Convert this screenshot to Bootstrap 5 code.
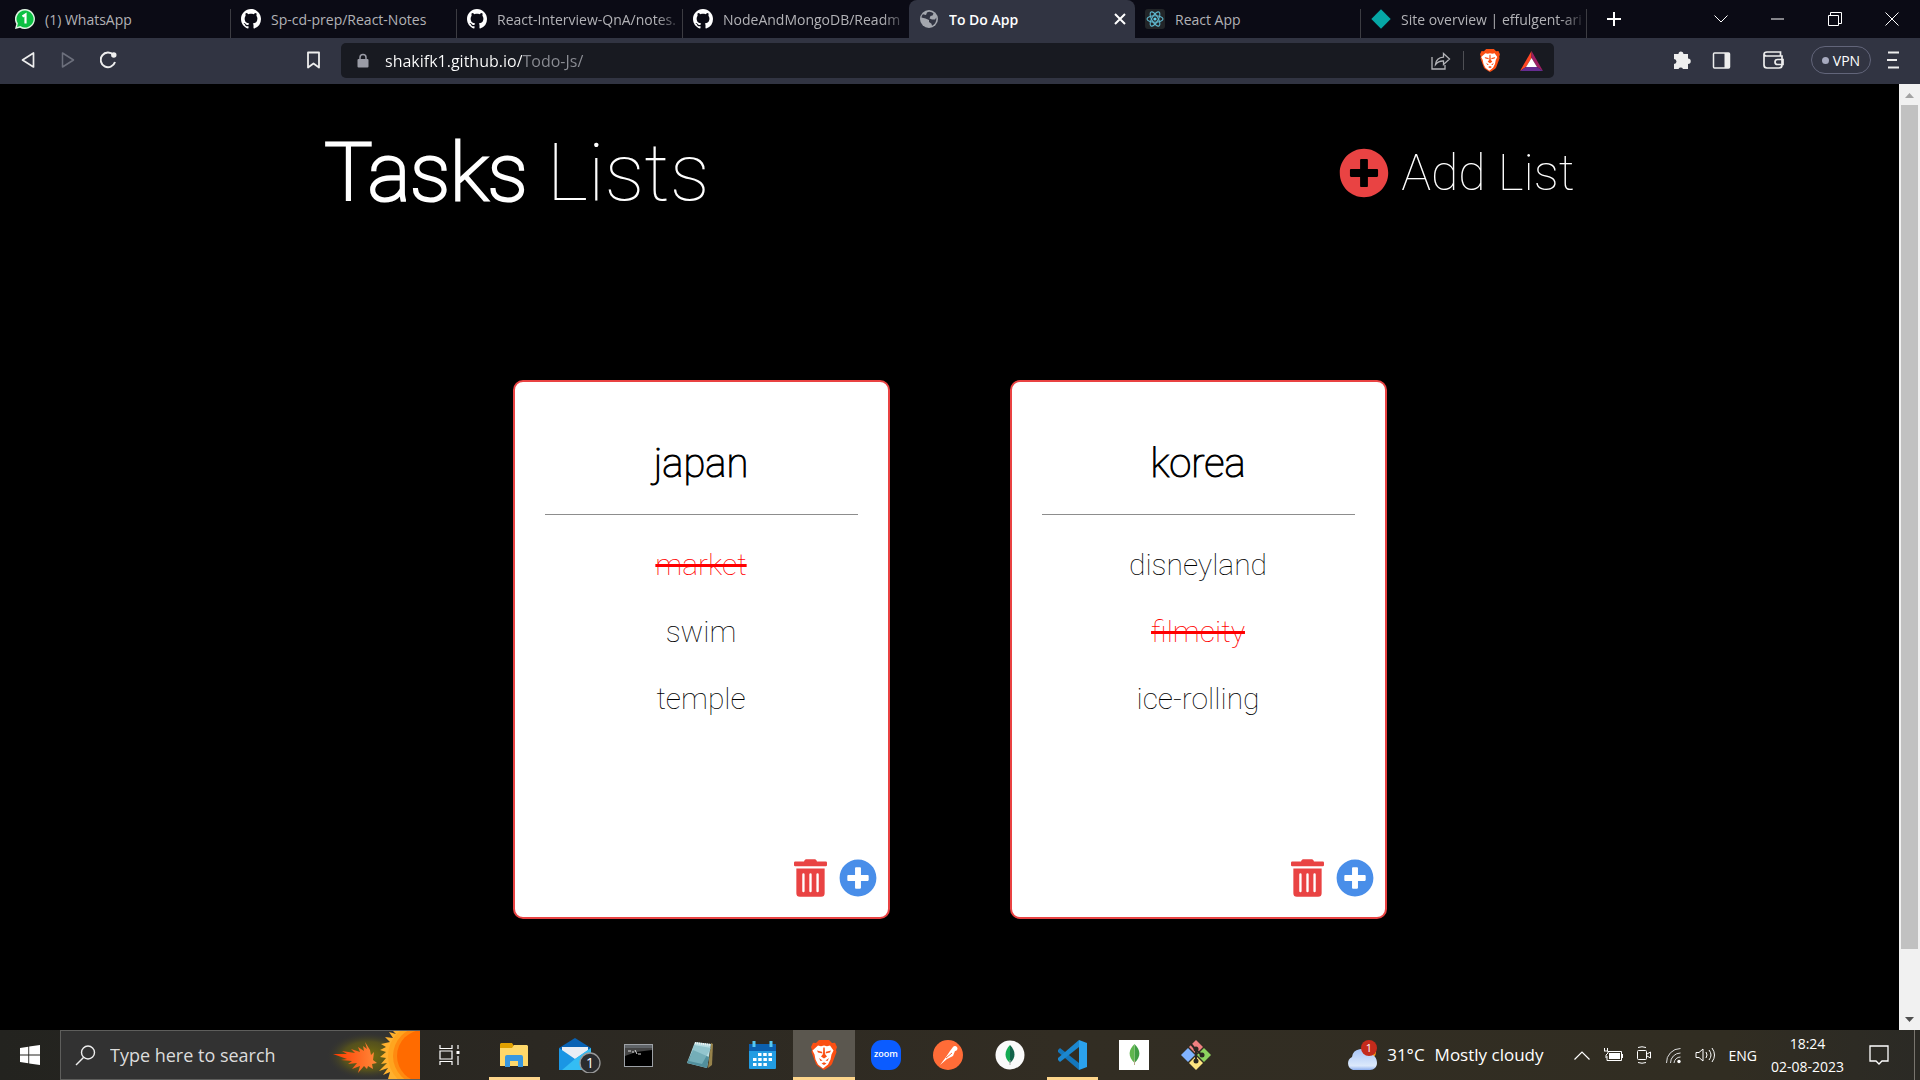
<!DOCTYPE html>
<html lang="en">
<head>
<meta charset="utf-8">
<meta name="viewport" content="width=device-width, initial-scale=1">
<title>To Do App</title>
<link href="https://cdn.jsdelivr.net/npm/bootstrap@5.3.0/dist/css/bootstrap.min.css" rel="stylesheet">
<style>
  :root { --ui: "Open Sans", "Noto Sans", sans-serif; --red: #e94343; --blue: #498ee9; }
  body { font-family: var(--ui); background: #000; overflow: hidden; }
  svg { display: block; flex: none; }
  button { background: none; border: 0; padding: 0; color: inherit; }

  /* Tab strip */
  .tab-strip { height: 38px; background: #0b0b15; color: #b2b2b6; font-size: 14px; }
  .tab-item { flex: 0 1 226px; min-width: 0; gap: 10px; padding: 0 0 0 10px; color: inherit; text-decoration: none; position: relative; }
  .tab-first { flex-basis: 231px; padding-left: 15px; }
  .tab-item .tab-name { overflow: hidden; white-space: nowrap; flex: 1 1 0; }
  .tab-item .fade-name { -webkit-mask-image: linear-gradient(to right, #000 86%, transparent); mask-image: linear-gradient(to right, #000 86%, transparent); }
  .tab-rule::after { content: ""; position: absolute; right: 0; top: 9px; bottom: 0; width: 1px; background: #3c3c42; }
  .tab-current { background: #313442; color: #fff; border-radius: 8px 8px 0 0; font-weight: 600; padding-right: 8px; }
  .win-buttons button { width: 57px; height: 38px; display: flex; align-items: center; justify-content: center; color: #fff; }
  .win-buttons .new-tab { width: 53px; }

  /* Toolbar */
  .tool-bar { height: 46px; background: #313442; color: #eee; }
  .nav-tools { flex: 0 0 341px; padding: 0 20px 2px 20px; }
  .address-bar { flex: 1 1 0; height: 35px; background: #181a21; border-radius: 5px; padding: 0 11px 0 16px; margin-top: -1px; }
  .url-box { background: linear-gradient(to right, #fff 137px, #8b8d94 137px); -webkit-background-clip: text; background-clip: text; color: transparent; border: 0; outline: 0; flex: 1 1 0; min-width: 0; font-size: 16px; padding: 0; }
  .bar-rule { margin: 8px 16px 8px 12px; }
  .right-tools { flex: 0 0 366px; padding: 0 21px 2px 0; }
  .vpn-pill { width: 60px; height: 28px; border: 1px solid #62657a; border-radius: 14px; font-size: 14px; color: #fff; margin-left: 27px; }
  .vpn-pill i { width: 7px; height: 7px; border-radius: 50%; background: #a7aabf; }

  /* Page */
  .page-body { background: #000; font-family: Roboto, sans-serif; font-weight: 100; color: #fff; }
  .head-wrap { width: 100%; max-width: 1250px; margin: 0 auto; padding-top: 42px; }
  .page-title { font-size: 80px; line-height: 94px; font-weight: 100; }
  .page-title b { font-weight: 100; -webkit-text-stroke: 3px #fff; }
  .add-list { font-size: 50px; line-height: 60px; gap: 12px; font-weight: 100; }
  .list-row { gap: 120px; margin-top: 160px; }
  .task-card { width: 377px; height: 539px; background: #fff; border: 2px solid var(--red); border-radius: 10px; color: #000; padding: 57px 30px 0; position: relative; }
  .task-card h2 { font-size: 40px; line-height: 50px; font-weight: 100; -webkit-text-stroke: 1px #000; margin: 0; }
  .task-card hr { margin: 25px 0 32px; opacity: 1; border-top: 1px solid #8d8d8d; }
  .task-card li { font-size: 30px; line-height: 35px; margin-bottom: 32px; }
  .task-card .done-task { color: #f00; text-decoration: line-through 3px; }
  .card-tools { position: absolute; right: 11px; bottom: 20px; gap: 12px; }
  .card-tools .del { color: var(--red); }
  .card-tools .plus { color: var(--blue); }
  .scroll-track { width: 21px; background: #f1f1f1; }
  .scroll-thumb { width: 17px; flex: 0 1 844px; background: #c1c1c1; }
  .scroll-track svg { height: 21px; }

  /* Taskbar */
  .task-bar { height: 50px; background: linear-gradient(to right, #23231f, #2b2822 28%, #322d23 55%, #312d22 90%, #2b2a25); color: #fff; }
  .start-btn { width: 60px; display: flex; align-items: center; justify-content: center; }
  .search-area { width: 360px; background: #323232; border: 1px solid #5e5e5c; border-right: 0; padding-left: 14px; overflow: hidden; }
  .search-area input { flex: 1 1 0; min-width: 0; background: none; border: 0; outline: 0; font-size: 18px; padding: 0 0 0 14px; color: #ddd; }
  .search-area input::placeholder { color: #dcdcdc; opacity: 1; }
  .app-btn { width: 62px; display: flex; align-items: center; justify-content: center; position: relative; }
  .app-view { width: 63px; padding-right: 4px; }
  .app-open::after { content: ""; position: absolute; bottom: 0; left: 6px; right: 5px; height: 3px; background: #fdd58b; }
  .app-focus { background: #5b574f; }
  .app-focus::after { left: 0; right: 0; }
  .weather-btn { font-size: 17px; gap: 10px; margin-right: 30px; }
  .tray { gap: 13px; font-size: 14px; margin-right: 8px; }
  .clock { width: 85px; font-size: 14px; line-height: 23px; }
  .note-btn { width: 57px; margin-right: 7px; display: flex; align-items: center; justify-content: center; }
  .desk-edge { width: 6px; border-left: 1px solid #78756e; }
</style>
<script src="https://cdn.jsdelivr.net/npm/bootstrap@5.3.0/dist/js/bootstrap.bundle.min.js"></script>
</head>
<body class="vh-100 d-flex flex-column">

<svg width="0" height="0" class="position-absolute" aria-hidden="true">
  <symbol id="gh" viewBox="0 0 16 16"><path fill="#fff" d="M8 0C3.58 0 0 3.58 0 8c0 3.54 2.29 6.53 5.47 7.59.4.07.55-.17.55-.38 0-.19-.01-.82-.01-1.49-2.01.37-2.53-.49-2.69-.94-.09-.23-.48-.94-.82-1.13-.28-.15-.68-.52-.01-.53.63-.01 1.08.58 1.23.82.72 1.21 1.87.87 2.33.66.07-.52.28-.87.51-1.07-1.78-.2-3.64-.89-3.64-3.95 0-.87.31-1.59.82-2.15-.08-.2-.36-1.02.08-2.12 0 0 .67-.21 2.2.82.64-.18 1.32-.27 2-.27s1.36.09 2 .27c1.53-1.04 2.2-.82 2.2-.82.44 1.1.16 1.92.08 2.12.51.56.82 1.27.82 2.15 0 3.07-1.87 3.75-3.65 3.95.29.25.54.73.54 1.48 0 1.07-.01 1.93-.01 2.2 0 .21.15.46.55.38A8.01 8.01 0 0 0 16 8c0-4.42-3.58-8-8-8z"/></symbol>
  <symbol id="plus-circle" viewBox="0 0 512 512"><path fill="currentColor" d="M256 8C119 8 8 119 8 256s111 248 248 248 248-111 248-248S393 8 256 8zm144 276c0 6.600-5.400 12-12 12h-92v92c0 6.600-5.400 12-12 12h-56c-6.600 0-12-5.400-12-12v-92h-92c-6.600 0-12-5.400-12-12v-56c0-6.600 5.400-12 12-12h92v-92c0-6.600 5.400-12 12-12h56c6.600 0 12 5.400 12 12v92h92c6.600 0 12 5.400 12 12v56z"/></symbol>
  <symbol id="trash" viewBox="0 0 448 512"><path fill="currentColor" d="M32 464a48 48 0 0 0 48 48h288a48 48 0 0 0 48-48V128H32zm272-256a16 16 0 0 1 32 0v224a16 16 0 0 1-32 0zm-96 0a16 16 0 0 1 32 0v224a16 16 0 0 1-32 0zm-96 0a16 16 0 0 1 32 0v224a16 16 0 0 1-32 0zM432 32H312l-9.400-18.700A24 24 0 0 0 281.100 0H166.800a23.720 23.720 0 0 0-21.400 13.300L136 32H16A16 16 0 0 0 0 48v32a16 16 0 0 0 16 16h416a16 16 0 0 0 16-16V48a16 16 0 0 0-16-16z"/></symbol>
  <symbol id="brave" viewBox="0 0 26 30"><path fill="#fb4f13" d="M8 0h10l3 3 3-.3L26 7l-1 3 .5 2L21 24c-1 2-5 4-8 6-3-2-7-4-8-6L.5 12 1 10 0 7l2-4.300L5 3z"/><path fill="#fff" d="M7 5.500l3 .700 3-.700 3 .700 3-.700 3.500 5-2 4-1 5-2.500 5-5 4-5-4-2.500-5-1-5-2-4z"/><path fill="#fb4f13" d="M6 10.500l5 1.300.500 1.700-4.500-1zM20 10.500l-5 1.300-.500 1.700 4.500-1zM12.300 7.500h1.400l.3 6.500 2 2.500-3 2-3-2 2-2.500zM8 18l3.500 2.500-2 .500zM18 18l-3.500 2.500 2 .500zM10.500 23.500l2.500-1.300 2.500 1.300-2.500 1.500z"/></symbol>
</svg>

<header>
  <nav class="tab-strip d-flex" aria-label="Tabs">
    <a href="#" class="tab-item tab-first tab-rule d-flex align-items-center"><svg width="20" height="20" viewBox="0 0 20 20"><path fill="#dff5e3" d="M10 0a10 10 0 1 1-5 18.700L0 20l1.300-5A10 10 0 0 1 10 0z"/><path fill="#0cc143" d="M10 1.500a8.500 8.500 0 1 1-4.600 15.600L2 18l.900-3.400A8.500 8.500 0 0 1 10 1.500z"/><path d="M7.500 7.500L10.500 5.500V14.500" fill="none" stroke="#fff" stroke-width="2.200"/></svg><span class="tab-name">(1) WhatsApp</span></a>
    <a href="#" class="tab-item tab-rule d-flex align-items-center"><svg width="20" height="20"><use href="#gh"/></svg><span class="tab-name">Sp-cd-prep/React-Notes</span></a>
    <a href="#" class="tab-item tab-rule d-flex align-items-center"><svg width="20" height="20"><use href="#gh"/></svg><span class="tab-name fade-name">React-Interview-QnA/notes.</span></a>
    <a href="#" class="tab-item d-flex align-items-center"><svg width="20" height="20"><use href="#gh"/></svg><span class="tab-name fade-name">NodeAndMongoDB/Readm</span></a>
    <div class="tab-item tab-current d-flex align-items-center"><svg width="20" height="20" viewBox="0 0 20 20"><circle cx="10" cy="10" r="9" fill="#a4a7ae"/><path fill="#313442" d="M8 3.500c2-1.500 5-.500 6.500 1l-1 2-2 .500-1 2.500 2.500 1h3l1.300-2c.5 4-1.500 7-4.300 8.300l-.500-2-2.500-1.800V11L6.500 9.500 2.500 8.500c0-1 .500-2.200 1.500-3.200L7 6z"/></svg><span class="tab-name">To Do App</span><button aria-label="Close tab"><svg width="14" height="14" viewBox="0 0 14 14"><path d="M2 2l10 10M12 2L2 12" stroke="#fff" stroke-width="2"/></svg></button></div>
    <a href="#" class="tab-item tab-rule d-flex align-items-center"><svg width="20" height="20" viewBox="0 0 20 20"><rect width="20" height="20" rx="3" fill="#222528"/><g fill="none" stroke="#5fb8cf" stroke-width="1.100"><ellipse cx="10" cy="10" rx="8" ry="3.200"/><ellipse cx="10" cy="10" rx="8" ry="3.200" transform="rotate(60 10 10)"/><ellipse cx="10" cy="10" rx="8" ry="3.200" transform="rotate(120 10 10)"/></g><circle cx="10" cy="10" r="1.600" fill="#5fd0ea"/></svg><span class="tab-name">React App</span></a>
    <a href="#" class="tab-item tab-rule d-flex align-items-center"><svg width="20" height="20" viewBox="0 0 20 20"><path fill="#06a7a5" d="M10 .300L19.700 10 10 19.700.300 10z"/></svg><span class="tab-name fade-name">Site overview | effulgent-ari</span></a>
    <div class="win-buttons d-flex flex-grow-1">
      <button class="new-tab" aria-label="New tab"><svg width="16" height="16" viewBox="0 0 16 16"><path d="M8 1v14M1 8h14" stroke="#fff" stroke-width="2"/></svg></button>
      <button class="ms-auto" aria-label="Search tabs"><svg width="14" height="8" viewBox="0 0 14 8"><path d="M.500.500L7 7 13.500.500" fill="none" stroke="#fff"/></svg></button>
      <button aria-label="Minimize"><svg width="13" height="2"><path d="M0 1h13" stroke="#fff"/></svg></button>
      <button aria-label="Restore"><svg width="14" height="14" viewBox="0 0 14 14"><path d="M.500 3.500h10v10H.500zM2.500 3V.500h11v11H11" fill="none" stroke="#fff"/></svg></button>
      <button aria-label="Close"><svg width="14" height="14" viewBox="0 0 14 14"><path d="M.500.500l13 13M13.500.500l-13 13" stroke="#fff"/></svg></button>
    </div>
  </nav>

  <div class="tool-bar d-flex align-items-center">
    <div class="nav-tools d-flex align-items-center">
      <button aria-label="Back"><svg width="16" height="18" viewBox="0 0 16 18"><path d="M13.500 2v14L2.500 9z" fill="none" stroke="#eee" stroke-width="1.700" stroke-linejoin="round"/></svg></button>
      <button class="ms-4" aria-label="Forward"><svg width="16" height="18" viewBox="0 0 16 18"><path d="M2.500 2v14L13.500 9z" fill="none" stroke="#6c6f7c" stroke-width="1.500" stroke-linejoin="round"/></svg></button>
      <button class="ms-4" aria-label="Reload"><svg width="18" height="18" viewBox="0 0 18 18"><path d="M13.500 4A7.300 7.300 0 1 0 15 11" fill="none" stroke="#eee" stroke-width="2"/><circle cx="13.800" cy="4" r="2.700" fill="#eee"/></svg></button>
      <button class="ms-auto" aria-label="Bookmark"><svg width="15" height="18" viewBox="0 0 15 18"><path d="M2 1.500h11v15l-5.500-4-5.500 4z" fill="none" stroke="#eee" stroke-width="1.800" stroke-linejoin="round"/></svg></button>
    </div>
    <div class="address-bar d-flex align-items-center">
      <svg class="me-3" width="12" height="16" viewBox="0 0 12 16"><path d="M3 7V4.500a3 3 0 0 1 6 0V7" fill="none" stroke="#9a9ca6" stroke-width="1.500"/><rect x=".500" y="6" width="11" height="8.500" rx="1" fill="#9a9ca6"/></svg>
      <input class="url-box" type="text" aria-label="Address" value="shakifk1.github.io/Todo-Js/">
      <button aria-label="Share"><svg width="20" height="19" viewBox="0 0 20 19"><path d="M1 6v12h13v-4M4.500 13.500C5 9 8 6.500 12.500 6.200V2.500L18.500 8l-6 5.500V10C9 9.800 6.500 11 4.500 13.500z" fill="none" stroke="#b3b4b8" stroke-width="1.300"/></svg></button>
      <span class="vr bar-rule"></span>
      <button aria-label="Brave Shields"><svg width="20" height="23"><use href="#brave"/></svg></button>
      <button class="ms-3 ps-1" aria-label="Brave Rewards"><svg width="23" height="20" viewBox="0 0 23 20"><path fill="#ff4724" d="M11.500 0v7L6 16 0 20z"/><path fill="#9e1f63" d="M11.500 0v7l5.500 9 6 4z"/><path fill="#662d91" d="M0 20l6-4h11l6 4z"/><path fill="#fff" d="M11.500 7L17 16H6z"/></svg></button>
    </div>
    <div class="right-tools d-flex align-items-center justify-content-end">
      <button aria-label="Extensions"><svg width="20" height="20" viewBox="0 0 20 20"><path fill="#eee" d="M6.500 4a2.500 2.500 0 0 1 5 0H16v4.500a2.500 2.500 0 0 1 0 5.500v5h-5a2.500 2.500 0 0 0-4.500 0H2v-5a2.500 2.500 0 0 0 0-5V4z"/></svg></button>
      <button class="ms-3 ps-1" aria-label="Side panel"><svg width="19" height="17" viewBox="0 0 19 17"><rect x="1.500" y="1" width="16" height="15" rx="1" fill="none" stroke="#eee" stroke-width="1.500"/><path fill="#eee" d="M12.500 1h5v15h-5z"/></svg></button>
      <button class="ms-4 ps-2" aria-label="Wallet"><svg width="21" height="18" viewBox="0 0 21 18"><path d="M17.500 5V1H4C2 1 1 2 1 3.500V14c0 2 1 3 3 3h12c2 0 3-1 3-3V5H3.500C2 5 1.500 4 1.500 3.500M20 8.500h-5.500a2.500 2.500 0 0 0 0 5H20z" fill="none" stroke="#eee" stroke-width="1.700"/></svg></button>
      <button class="vpn-pill d-flex align-items-center justify-content-center gap-1"><i></i>VPN</button>
      <button class="ms-3" aria-label="Menu"><svg width="12" height="18" viewBox="0 0 12 18"><path d="M1 1.500h11M0 9h10M1 16.500h11" stroke="#eee" stroke-width="2"/></svg></button>
    </div>
  </div>
</header>

<div class="d-flex flex-grow-1" style="min-height:0">
  <main class="page-body flex-grow-1">
    <div class="head-wrap d-flex justify-content-between align-items-center">
      <h1 class="page-title m-0"><b>Tasks</b> Lists</h1>
      <button class="add-list d-flex align-items-center"><svg width="50" height="50" color="#e94343"><use href="#plus-circle"/></svg>Add List</button>
    </div>
    <div class="list-row d-flex justify-content-center">
      <section class="task-card text-center">
        <h2>japan</h2>
        <hr>
        <ul class="list-unstyled m-0">
          <li><span class="done-task">market</span></li>
          <li>swim</li>
          <li>temple</li>
        </ul>
        <div class="card-tools d-flex">
          <button class="del" aria-label="Delete japan"><svg width="33" height="38"><use href="#trash"/></svg></button>
          <button class="plus" aria-label="Add to japan"><svg width="38" height="38"><use href="#plus-circle"/></svg></button>
        </div>
      </section>
      <section class="task-card text-center">
        <h2>korea</h2>
        <hr>
        <ul class="list-unstyled m-0">
          <li>disneyland</li>
          <li><span class="done-task">filmcity</span></li>
          <li>ice-rolling</li>
        </ul>
        <div class="card-tools d-flex">
          <button class="del" aria-label="Delete korea"><svg width="33" height="38"><use href="#trash"/></svg></button>
          <button class="plus" aria-label="Add to korea"><svg width="38" height="38"><use href="#plus-circle"/></svg></button>
        </div>
      </section>
    </div>
  </main>
  <div class="scroll-track d-flex flex-column align-items-center" aria-hidden="true">
    <svg width="21" viewBox="0 0 21 21"><path fill="#a3a3a3" d="M6 14h9l-4.500-5z"/></svg>
    <div class="scroll-thumb"></div>
    <svg class="mt-auto" width="21" viewBox="0 0 21 21"><path fill="#505050" d="M6 8h9l-4.500 5z"/></svg>
  </div>
</div>

<footer class="task-bar d-flex">
  <button class="start-btn" aria-label="Start"><svg width="20" height="20" viewBox="0 0 20 20"><path fill="#fff" d="M0 3l8.300-1.200v7.700H0zM9.200 1.600L20 0v9.500H9.200zM0 10.400h8.300v7.800L0 17zM9.200 10.400H20V20L9.200 18.400z"/></svg></button>
  <label class="search-area d-flex align-items-center">
    <svg width="21" height="21" viewBox="0 0 21 21"><circle cx="13" cy="7.500" r="6.500" fill="none" stroke="#eee" stroke-width="1.400"/><path d="M8.500 12.500L1 20" stroke="#eee" stroke-width="1.400"/></svg>
    <input type="text" placeholder="Type here to search" aria-label="Search">
    <svg width="94" height="49" viewBox="0 0 94 49">
      <defs><radialGradient id="glow"><stop offset="0" stop-color="#8a8000" stop-opacity=".8"/><stop offset=".6" stop-color="#6a6410" stop-opacity=".6"/><stop offset="1" stop-color="#323232" stop-opacity="0"/></radialGradient><linearGradient id="flare"><stop offset="0" stop-color="#ff3a00"/><stop offset="1" stop-color="#ff8a3a"/></linearGradient></defs>
      <ellipse cx="42" cy="25" rx="42" ry="24" fill="url(#glow)"/>
      <path fill="url(#flare)" d="M7 23l14 0-5-3 13 2-4-4 9 3-2-5 6 4-1-5 4 3-2-7 5 8 1 5 3-3-1 8 4 3-5 1 1 5-5-3-1 3-3-3-6 7 2-7-8 3 5-6-9 1 4-3-11-1 6-1z"/>
      <path fill="#ffb12e" d="M94 0H67l3 3-7-2 4 6-8-1 5 5-9 2 5 3-6 3 6 2-6 5 6 1-5 6 6-1-8 8 9-3-5 7 7-3-2 7h32z"/>
      <circle cx="94" cy="25" r="32" fill="#ffa51f"/><circle cx="96" cy="25" r="29" fill="#ff8a10"/><circle cx="97" cy="25" r="26" fill="#ff6b00"/>
    </svg>
  </label>
  <button class="app-btn app-view" aria-label="Task view"><svg width="21" height="20" viewBox="0 0 21 20"><path d="M1 0v3.500h12V0M1 20v-3.500h12V20M1 6h12v8H1zM19 0v4M19 11v9" fill="none" stroke="#fff" stroke-width="1.200"/><path fill="#fff" d="M17.500 6h3v3h-3z"/></svg></button>
  <button class="app-btn app-open" aria-label="File Explorer"><svg width="28" height="24" viewBox="0 0 28 24"><path fill="#e0a000" d="M0 1l1-1h11l2 3v4H0z"/><path fill="#fed86a" d="M0 5h12l2-3h13l1 1v20H0z"/><path fill="#3898e0" d="M5 24V14q0-2 2-2h14q2 0 2 2v10h-5v-6h-8v6z"/></svg></button>
  <button class="app-btn ps-2" aria-label="Mail"><svg width="42" height="36" viewBox="0 0 42 36"><path fill="#0862b4" d="M0 11L16 1l16 10-2 10H2z"/><path fill="#e9eef5" d="M3 10h26v8L16 24 3 18z"/><path fill="#1b96e4" d="M0 11l16 11L32 11v22H0z"/><path fill="#34bdf4" d="M32 11L16 22 3 33h29z"/><circle cx="31" cy="26" r="10" fill="#2b2c2e" stroke="#999" stroke-width="1.300"/><text x="31" y="31" text-anchor="middle" font-size="14" fill="#fff">1</text></svg></button>
  <button class="app-btn" aria-label="Command Prompt"><svg width="29" height="23" viewBox="0 0 29 23"><rect x=".500" y=".500" width="28" height="22" fill="#000" stroke="#9da1a6"/><path fill="#606468" d="M1 1h27v3H1z"/><path fill="#444" d="M1 4h27v2L12 8 1 12z"/><path d="M4 7h3M9 7v2M11 6l2 4M14 10h3" stroke="#ddd"/></svg></button>
  <button class="app-btn" aria-label="Notepad"><svg width="28" height="28" viewBox="0 0 28 28"><path fill="#97834b" d="M25 2l2 1-1 21-4 3z"/><path fill="#b7dde3" d="M9 1l16 2-4 24L1 22z"/><path fill="#518f9c" d="M7 9L1 22l20 5 2-11z"/><path fill="#83bbc5" d="M8 4l17 3-9 16-13-3z" opacity=".7"/><path d="M9 2l16 2" stroke="#f2f2f2" stroke-width="2" stroke-dasharray="1 1"/></svg></button>
  <button class="app-btn" aria-label="Calendar"><svg width="27" height="29" viewBox="0 0 27 29"><rect y="3" width="27" height="25" rx="1" fill="#229ce2"/><path fill="#0b5fae" d="M0 3h27v7H0z"/><path d="M5 0v6M22 0v6" stroke="#56c9f1" stroke-width="3"/><path d="M9 13.500h14M4 18.500h19M4 23.500h14" stroke="#fff" stroke-width="3" stroke-dasharray="3.500 1.700"/></svg></button>
  <button class="app-btn app-open app-focus" aria-label="Brave"><svg width="26" height="30"><use href="#brave"/></svg></button>
  <button class="app-btn" aria-label="Zoom"><svg width="30" height="30" viewBox="0 0 30 30"><rect width="30" height="30" rx="11" fill="#0b5cff"/><text x="15" y="17" text-anchor="middle" font-size="9" font-weight="600" fill="#fff">zoom</text></svg></button>
  <button class="app-btn" aria-label="Postman"><svg width="30" height="30" viewBox="0 0 30 30"><circle cx="15" cy="15" r="15" fill="#ff6c37"/><path fill="#fff" d="M20 7a2.500 2.500 0 1 1 2 4l-2 5-6 3-7 6 6-8 4-6z"/><path d="M13 18l6-5" stroke="#ff6c37"/></svg></button>
  <button class="app-btn" aria-label="MongoDB Compass"><svg width="30" height="30" viewBox="0 0 30 30"><circle cx="15" cy="15" r="14.500" fill="#fafafa"/><path fill="#116149" d="M15 5c6 6 6 13 0 18z"/><path fill="#13aa52" d="M15 5c-6 6-6 13 0 18z"/><path d="M15 20v5" stroke="#aaa"/></svg></button>
  <button class="app-btn app-open" aria-label="Visual Studio Code"><svg width="30" height="30" viewBox="0 0 30 30"><path fill="#1477bd" d="M1 10l2-2 19 15v7L1 12z"/><path fill="#1b87cf" d="M1 20l2 2 19-15V0L1 18z"/><path fill="#2ba2ee" d="M22 0l8 3v24l-8 3z"/></svg></button>
  <button class="app-btn" aria-label="MongoDB"><svg width="30" height="30" viewBox="0 0 30 30"><path fill="#fff" d="M0 0h30v30H0z"/><path fill="#3f9c44" d="M15.500 4c6 6 7 12 0 19z"/><path fill="#5fb64f" d="M15.500 4c-6 6-7 12 0 19z"/><path d="M15.500 20v5" stroke="#b8ad8c"/></svg></button>
  <button class="app-btn" aria-label="Git"><svg width="30" height="30" viewBox="0 0 30 30"><path fill="#f08080" d="M15 0l7 7-7 7-7-7z"/><path fill="#80b3ff" d="M7 8l7 7-7 7-7-7z"/><path fill="#8dd35f" d="M23 8l7 7-7 7-7-7z"/><path fill="#ffe680" d="M15 16l7 7-7 7-7-7z"/><path d="M10 4l5 6v13M15 10l6 5" fill="none" stroke="#2b2822" stroke-width="2"/><g fill="#2b2822"><circle cx="15" cy="9" r="2.500"/><circle cx="21" cy="15" r="2.500"/><circle cx="15" cy="21" r="2.500"/></g></svg></button>

  <div class="d-flex ms-auto">
    <button class="weather-btn d-flex align-items-center text-nowrap"><svg width="31" height="31" viewBox="0 0 31 31"><defs><linearGradient id="cloud" x2="0" y2="1"><stop offset="0" stop-color="#a7c5f7"/><stop offset=".8" stop-color="#dce9fb"/><stop offset="1" stop-color="#8fb0ee"/></linearGradient></defs><circle cx="23" cy="12" r="7" fill="#ff9a17"/><path fill="url(#cloud)" d="M7 30a7 7 0 0 1-1-13 9 9 0 0 1 17-3c5 0 8 4 8 9 0 4-3 7-7 7z"/><circle cx="23" cy="8" r="8" fill="#c42b1c"/><text x="23" y="12" text-anchor="middle" font-size="11" fill="#fff">1</text></svg><span>31°C</span><span>Mostly cloudy</span></button>
    <div class="tray d-flex align-items-center">
      <button aria-label="Hidden icons"><svg width="16" height="9" viewBox="0 0 16 9"><path d="M.500 8.500L8 1l7.500 7.500" fill="none" stroke="#fff" stroke-width="1.200"/></svg></button>
      <svg width="20" height="14" viewBox="0 0 20 14"><path d="M5 3.500h13.500v9H4V8M19.500 6v4M1.500 0v3M4.500 0v3M1 3h4v2L3 7v3" fill="none" stroke="#fff"/><path fill="#fff" d="M6 5h11v6H6z"/></svg>
      <svg width="16" height="18" viewBox="0 0 16 18"><rect x="1.500" y="4.500" width="9" height="9" rx="1" fill="none" stroke="#fff"/><path d="M11 8l3.500-2v6L11 10M2 1.500Q6 0 10 1.500M2 16.500Q6 18 10 16.500" fill="none" stroke="#fff"/></svg>
      <svg width="17" height="17" viewBox="0 0 17 17"><path d="M1.500 16A14 14 0 0 1 15.500 1.500M5.500 16A10 10 0 0 1 15.500 6M9 16a6.500 6.500 0 0 1 6.500-6" fill="none" stroke="#ddd"/><circle cx="14" cy="14.500" r="1.700" fill="#fff"/></svg>
      <svg width="21" height="16" viewBox="0 0 21 16"><path d="M1 5.500h3L8 2v12l-4-3.500H1zM11 5q2 3 0 6M14 3q4 5 0 10M17 1q5 7 0 14" fill="none" stroke="#fff"/></svg>
      <span>ENG</span>
    </div>
    <div class="clock text-center d-flex flex-column justify-content-center"><span>18:24</span><span>02-08-2023</span></div>
    <button class="note-btn" aria-label="Notifications"><svg width="20" height="21" viewBox="0 0 20 21"><path d="M1 1h18v15h-6l-3 3-3-3H1z" fill="none" stroke="#fff" stroke-width="1.300"/></svg></button>
    <div class="desk-edge"></div>
  </div>
</footer>
</body>
</html>
